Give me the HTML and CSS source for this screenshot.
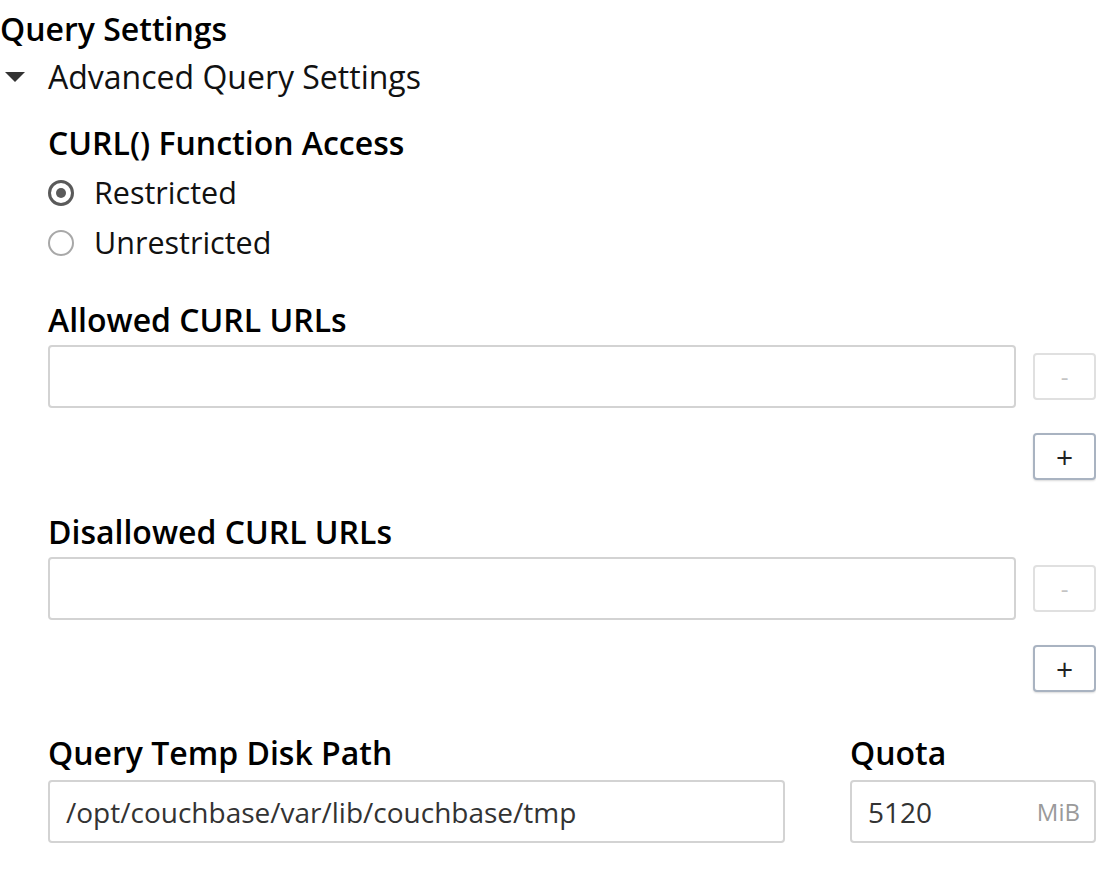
FILE: index.html
```html
<!DOCTYPE html>
<html>
<head>
<meta charset="utf-8">
<link rel="stylesheet" href="styles.css">
</head>
<body>
<div class="page">
  <h1 class="title">Query Settings</h1>
  <div class="toggle"><span class="caret"></span>Advanced Query Settings</div>
  <div class="advanced">
    <div class="label first">CURL() Function Access</div>
    <label class="radio"><span class="dot checked"></span>Restricted</label>
    <label class="radio"><span class="dot"></span>Unrestricted</label>

    <div class="label allowed">Allowed CURL URLs</div>
    <div class="url-row">
      <div class="input"></div>
      <button class="btn minus">-</button>
    </div>
    <div class="add-row"><button class="btn plus">+</button></div>

    <div class="label disallowed">Disallowed CURL URLs</div>
    <div class="url-row">
      <div class="input"></div>
      <button class="btn minus">-</button>
    </div>
    <div class="add-row"><button class="btn plus">+</button></div>

    <div class="temp-row">
      <div class="col path">
        <div class="label">Query Temp Disk Path</div>
        <div class="input text">/opt/couchbase/var/lib/couchbase/tmp</div>
      </div>
      <div class="col quota">
        <div class="label">Quota</div>
        <div class="input text"><span>5120</span><span class="unit">MiB</span></div>
      </div>
    </div>
  </div>
</div>
</body>
</html>
```
FILE: styles.css
```css
* { box-sizing: border-box; }
html, body { margin: 0; padding: 0; background: #fff; }
body {
  font-family: "Open Sans", "Liberation Sans", sans-serif;
  color: #000;
  width: 1096px;
  height: 874px;
  overflow: hidden;
}
.page { padding-top: 5px; }
.title {
  margin: 0;
  font-size: 32px;
  line-height: 48px;
  font-weight: 600;
}
.toggle {
  display: flex;
  align-items: center;
  font-size: 32px;
  line-height: 48px;
  font-weight: 400;
  color: #111;
}
.caret {
  width: 0; height: 0;
  border-left: 10px solid transparent;
  border-right: 10px solid transparent;
  border-top: 10px solid #333;
  margin-left: 5px;
  margin-right: 23px;
  margin-top: 0;
}
.advanced { padding-left: 48px; }
.label {
  font-size: 32px;
  line-height: 48px;
  font-weight: 600;
  color: #000;
}
.label.first { margin-top: 18px; }
.radio {
  display: flex;
  align-items: center;
  font-size: 30.5px;
  line-height: 50px;
  color: #111;
}
.dot {
  width: 26px; height: 26px;
  border-radius: 50%;
  border: 2px solid #a8a8a8;
  margin-right: 20px;
  margin-top: 2px;
  position: relative;
  flex: none;
}
.dot.checked {
  border: 3px solid #5a5a5a;
}
.dot.checked::after {
  content: "";
  position: absolute;
  left: 5px; top: 5px;
  width: 10px; height: 10px;
  border-radius: 50%;
  background: #5a5a5a;
}
.label.allowed { margin-top: 29px; }
.label.disallowed { margin-top: 28px; }
.url-row {
  display: flex;
  align-items: flex-start;
  gap: 17px;
  margin-top: 1px;
}
.input {
  flex: 1;
  height: 63px;
  border: 2px solid #d3d3d3;
  border-radius: 4px;
  background: #fff;
}
.btn {
  width: 63px;
  height: 47px;
  border-radius: 4px;
  background: #fff;
  font-family: "Open Sans", "Liberation Sans", sans-serif;
  padding: 0;
}
.minus {
  margin-top: 8px;
  border: 2px solid #e0e0e0;
  color: #c4c4c4;
  font-size: 24px;
}
.add-row {
  display: flex;
  justify-content: flex-end;
  margin-top: 25px;
}
.plus {
  border: 2px solid #a9b3c1;
  color: #222;
  font-size: 30px;
  line-height: 40px;
  box-shadow: 0 1px 2px rgba(0,0,0,0.15);
}
.temp-row {
  display: flex;
  gap: 65px;
  margin-top: 37px;
}
.col .label { margin-bottom: 3px; }
.path { width: 737px; }
.quota { flex: 1; }
.input.text {
  display: flex;
  align-items: center;
  justify-content: space-between;
  padding: 0 14px 0 16px;
  font-size: 28px;
  color: #333;
}
.unit { color: #9a9a9a; font-size: 24px; }
```
